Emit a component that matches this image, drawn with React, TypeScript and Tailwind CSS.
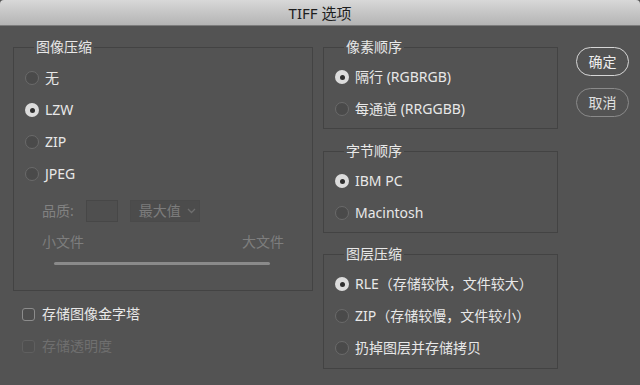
import React from "react";

const FONT = { fontFamily: '"Noto Sans", "Noto Sans CJK SC", sans-serif' };

function Radio({ checked, label }: { checked?: boolean; label: string }) {
  return (
    <div className="flex h-[32px] items-center">
      {checked ? (
        <div className="flex h-[14px] w-[14px] items-center justify-center rounded-full bg-[#dcdcdc]">
          <div className="h-[5px] w-[5px] rounded-full bg-[#2e2e2e]" />
        </div>
      ) : (
        <div className="h-[14px] w-[14px] rounded-full border border-[#6a6a6a] bg-[#4a4a4a]" />
      )}
      <span className="ml-[6px] text-[14px] leading-[18px] text-[#e8e8e8]">{label}</span>
    </div>
  );
}

function Group({
  title,
  children,
  className,
}: {
  title: string;
  children: React.ReactNode;
  className?: string;
}) {
  return (
    <fieldset className={"border border-[#434343] " + (className ?? "")}>
      <legend className="ml-[20px] px-[2px] text-[14px] leading-[18px] text-[#e8e8e8]">{title}</legend>
      {children}
    </fieldset>
  );
}

export default function App() {
  return (
    <div className="h-[385px] w-[640px] overflow-hidden bg-[#535353]" style={FONT}>
      <div className="flex h-[26px] items-center justify-center rounded-t-[4px] border-b border-[#7c7c7c] bg-gradient-to-b from-[#d8d8d8] to-[#b4b4b4]">
        <span className="text-[15px] leading-[18px] text-[#1e1e1e]">TIFF 选项</span>
      </div>
      <div className="flex pl-[13px] pt-[12px]">
        {/* Left column */}
        <div className="w-[300px]">
          <Group title="图像压缩" className="h-[253px]">
            <div className="mt-[6px] pl-[11px]">
              <Radio label="无" />
              <Radio checked label="LZW" />
              <Radio label="ZIP" />
              <Radio label="JPEG" />
            </div>
            <div className="mt-[10px] flex h-[22px] items-center pl-[28px] text-[14px] text-[#828282]">
              <span className="leading-[18px]">品质:</span>
              <div className="ml-[12px] h-[22px] w-[32px] border border-[#474747] bg-[#4f4f4f]" />
              <div className="ml-[12px] flex h-[22px] w-[70px] items-center border border-[#4a4a4a] bg-[#4c4c4c] pl-[8px]">
                <span className="leading-[18px] text-[#7c7c7c]">最大值</span>
                <svg className="ml-[6px]" width="9" height="6" viewBox="0 0 9 6">
                  <path d="M1 1l3.5 3.5L8 1" fill="none" stroke="#6e6e6e" strokeWidth="1.3" />
                </svg>
              </div>
            </div>
            <div className="mt-[11px] flex h-[18px] items-center justify-between pl-[28px] pr-[28px] text-[14px] leading-[18px] text-[#7e7e7e]">
              <span>小文件</span>
              <span>大文件</span>
            </div>
            <div className="ml-[40px] mt-[11px] h-[3px] w-[216px] rounded-full bg-[#8a8a8a]" />
          </Group>
          <div className="mt-[13px] flex h-[20px] items-center pl-[9px]">
            <div className="h-[13px] w-[13px] rounded-[3px] border border-[#8c8c8c] bg-[#4e4e4e]" />
            <span className="ml-[7px] text-[14px] leading-[18px] text-[#e8e8e8]">存储图像金字塔</span>
          </div>
          <div className="mt-[12px] flex h-[20px] items-center pl-[9px]">
            <div className="h-[13px] w-[13px] rounded-[3px] border border-[#5f5f5f] bg-[#505050]" />
            <span className="ml-[7px] text-[14px] leading-[18px] text-[#6f6f6f]">存储透明度</span>
          </div>
        </div>

        {/* Middle column */}
        <div className="ml-[10px] w-[235px]">
          <Group title="像素顺序" className="pb-[3px]">
            <div className="mt-[5px] pl-[11px]">
              <Radio checked label="隔行 (RGBRGB)" />
              <Radio label="每通道 (RRGGBB)" />
            </div>
          </Group>
          <Group title="字节顺序" className="mt-[13px] pb-[3px]">
            <div className="mt-[5px] pl-[11px]">
              <Radio checked label="IBM PC" />
              <Radio label="Macintosh" />
            </div>
          </Group>
          <Group title="图层压缩" className="mt-[12px] pb-[4px]">
            <div className="mt-[5px] pl-[11px]">
              <Radio checked label="RLE（存储较快，文件较大）" />
              <Radio label="ZIP（存储较慢，文件较小）" />
              <Radio label="扔掉图层并存储拷贝" />
            </div>
          </Group>
        </div>

        {/* Buttons */}
        <div className="ml-[18px] flex flex-col pt-[9px]">
          <button className="flex h-[29px] w-[53px] items-center justify-center rounded-full border-[1.5px] border-[#d6d6d6] text-[14px] text-[#eeeeee]">
            确定
          </button>
          <button className="mt-[12px] flex h-[29px] w-[53px] items-center justify-center rounded-full border border-[#8a8a8a] text-[14px] text-[#e0e0e0]">
            取消
          </button>
        </div>
      </div>
    </div>
  );
}
